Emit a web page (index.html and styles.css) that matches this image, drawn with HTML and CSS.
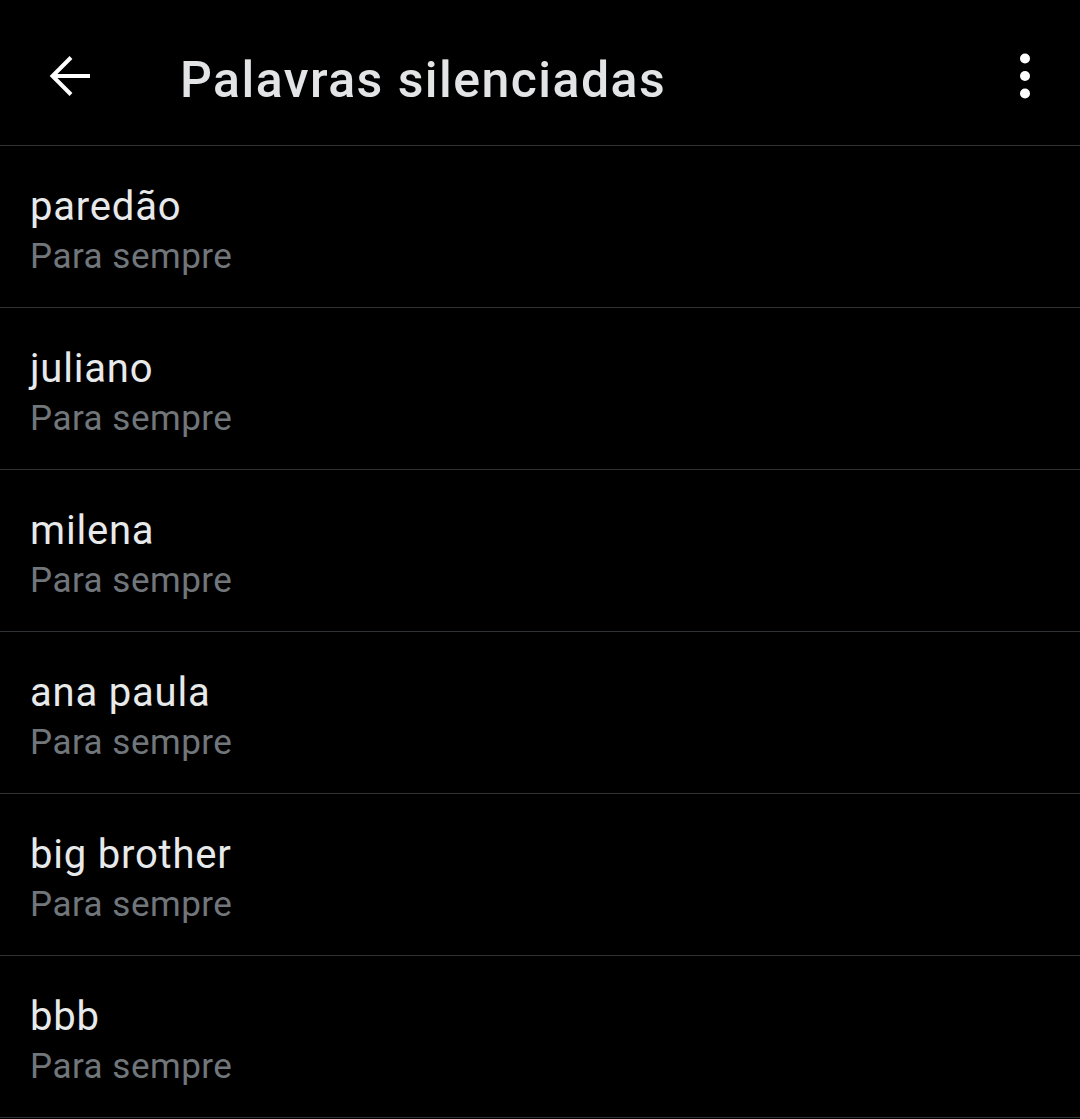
FILE: index.html
```html
<!DOCTYPE html>
<html lang="pt">
<head>
<meta charset="utf-8">
<title>Palavras silenciadas</title>
<link rel="stylesheet" href="styles.css">
</head>
<body>
<header class="topbar">
  <button class="icon-btn back" aria-label="Voltar">
    <svg width="44" height="44" viewBox="0 0 44 44" fill="none" stroke="#ffffff" stroke-width="4" stroke-linecap="butt" stroke-linejoin="miter">
      <path d="M42 22H5"/>
      <path d="M23 3.5L4.5 22L23 40.5"/>
    </svg>
  </button>
  <h1 class="title">Palavras silenciadas</h1>
  <button class="icon-btn more" aria-label="Mais opções">
    <svg width="12" height="48" viewBox="0 0 12 48" fill="#ffffff">
      <circle cx="6" cy="6.5" r="5"/>
      <circle cx="6" cy="24" r="5"/>
      <circle cx="6" cy="41.5" r="5"/>
    </svg>
  </button>
</header>
<ul class="list">
  <li class="item"><span class="word">paredão</span><span class="dur">Para sempre</span></li>
  <li class="item"><span class="word">juliano</span><span class="dur">Para sempre</span></li>
  <li class="item"><span class="word">milena</span><span class="dur">Para sempre</span></li>
  <li class="item"><span class="word">ana paula</span><span class="dur">Para sempre</span></li>
  <li class="item"><span class="word">big brother</span><span class="dur">Para sempre</span></li>
  <li class="item"><span class="word">bbb</span><span class="dur">Para sempre</span></li>
</ul>
</body>
</html>
```
FILE: styles.css
```css
html, body {
  margin: 0;
  padding: 0;
  background: #000000;
}
body {
  font-family: Roboto, "Noto Sans", sans-serif;
  color: #e7e9ea;
}
.topbar {
  height: 146px;
  box-sizing: border-box;
  padding-top: 7px;
  display: flex;
  align-items: center;
  border-bottom: 1px solid #2f3336;
}
.icon-btn {
  background: none;
  border: 0;
  padding: 0;
  display: flex;
  align-items: center;
  justify-content: center;
}
.back {
  margin-left: 48px;
  width: 44px;
  height: 44px;
}
.title {
  margin: 7px 0 0 88px;
  font-size: 50px;
  font-weight: 500;
  letter-spacing: 1.45px;
  color: #e2e4e5;
  flex: 1;
}
.more {
  margin-right: 49px;
}
.list {
  list-style: none;
  margin: 0;
  padding: 0;
}
.item {
  height: 162px;
  box-sizing: border-box;
  padding: 37px 0 0 30px;
  border-bottom: 1px solid #2f3336;
  display: flex;
  flex-direction: column;
}
.word {
  font-size: 40px;
  line-height: 48px;
  letter-spacing: 0.8px;
  color: #e7e9ea;
}
.dur {
  font-size: 35px;
  line-height: 52px;
  letter-spacing: 0.5px;
  color: #71767b;
}
```
